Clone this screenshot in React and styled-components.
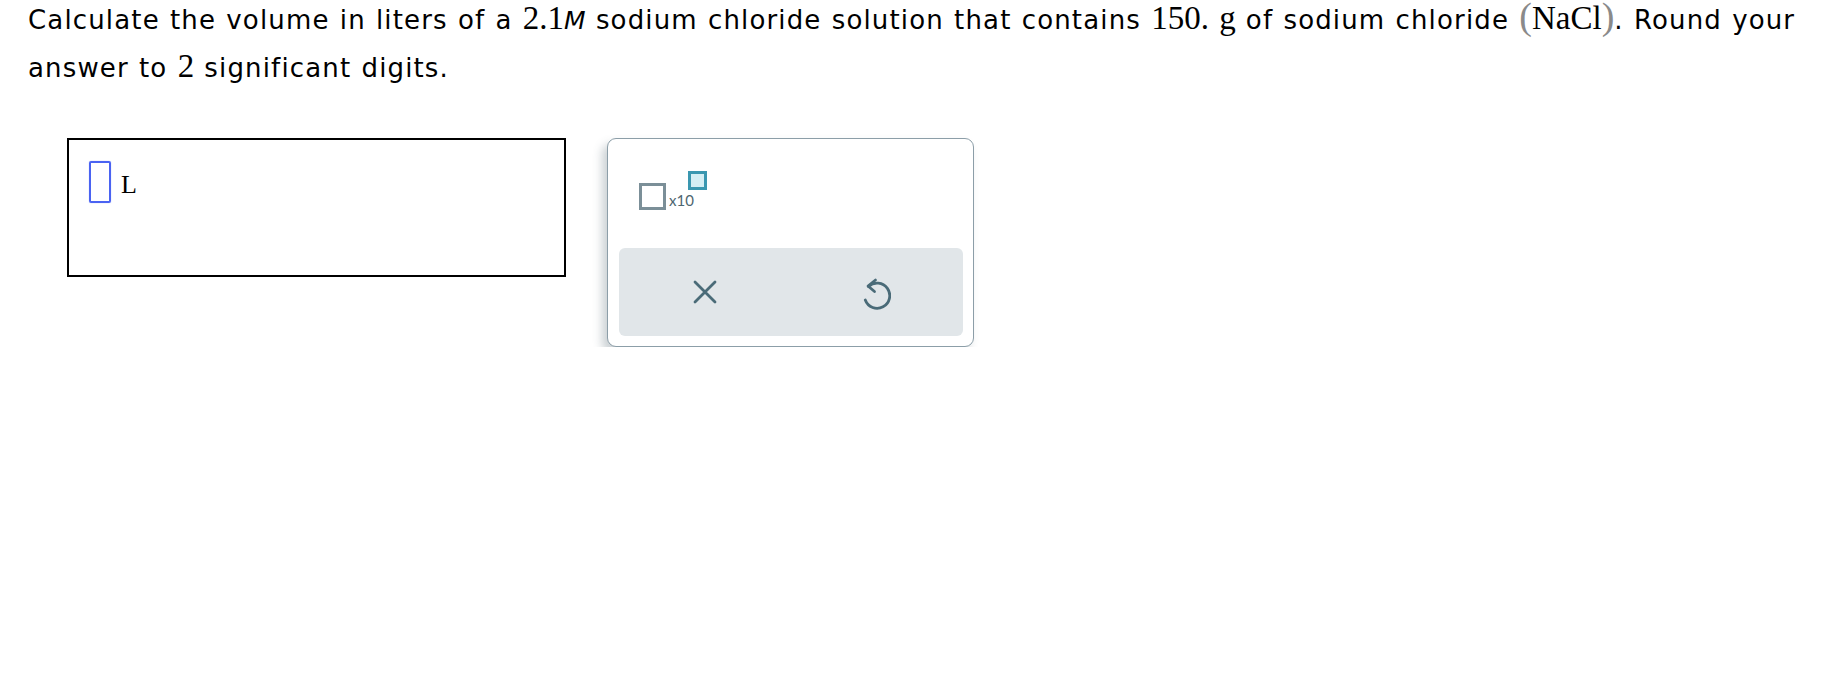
import React from "react";
import styled, { createGlobalStyle } from "styled-components";

const GlobalStyle = createGlobalStyle`
  body {
    margin: 0;
    background: #fff;
  }
`;

const Page = styled.div`
  padding: 0 28px;
`;

const Question = styled.div`
  margin-top: -4px;
  max-width: 1780px;
  font-family: "DejaVu Sans", Verdana, sans-serif;
  font-size: 26px;
  letter-spacing: 1.15px;
  word-spacing: 0.8px;
  line-height: 48px;
  color: #000;
`;

const Num = styled.span`
  font-family: "Liberation Serif", "Times New Roman", serif;
  font-size: 33px;
  letter-spacing: 0;
  line-height: 0;
`;

const Unit = styled.span`
  font-family: "DejaVu Sans", Verdana, sans-serif;
  font-style: italic;
  font-size: 25px;
  letter-spacing: 0;
  line-height: 0;
`;

const Paren = styled.span`
  font-family: "Liberation Serif", "Times New Roman", serif;
  font-size: 38px;
  line-height: 0;
  letter-spacing: 0;
  color: #8a8a8a;
`;

const AnswerRow = styled.div`
  display: flex;
  align-items: flex-start;
  gap: 41px;
  margin-top: 46px;
  padding-left: 39px;
`;

const AnswerBox = styled.div`
  box-sizing: border-box;
  width: 499px;
  height: 139px;
  border: 2px solid #000;
  display: flex;
  align-items: flex-start;
  gap: 10px;
  padding: 21px 0 0 20px;
`;

const Cursor = styled.div`
  box-sizing: border-box;
  width: 22px;
  height: 42px;
  border: 2.5px solid #4a63f2;
  border-radius: 2px;
  box-shadow: 0 0 1px rgba(74, 99, 242, 0.6);
`;

const UnitLabel = styled.span`
  font-family: "Liberation Serif", "Times New Roman", serif;
  font-size: 26px;
  line-height: 26px;
  margin-top: 11px;
  color: #000;
`;

const Palette = styled.div`
  box-sizing: border-box;
  width: 367px;
  height: 209px;
  border: 1.5px solid #8c9ea8;
  border-radius: 9px;
  background: #fff;
  box-shadow: -5px 6px 10px rgba(70, 90, 100, 0.28);
  display: flex;
  flex-direction: column;
  justify-content: space-between;
  padding: 32px 10px 10px 11px;
`;

const SciRow = styled.div`
  display: flex;
  padding-left: 20px;
`;

const SciKey = styled.div`
  display: inline-flex;
  align-items: flex-end;
  height: 39px;
`;

const Slot = styled.div`
  box-sizing: border-box;
  width: ${({ small }) => (small ? 19 : 27)}px;
  height: ${({ small }) => (small ? 19 : 27)}px;
  border: 3px solid ${({ small }) => (small ? "#3a97b0" : "#7b8f98")};
  background: ${({ small }) => (small ? "#d4eef4" : "#fff")};
  align-self: ${({ small }) => (small ? "flex-start" : "flex-end")};
  margin-left: ${({ small }) => (small ? -6 : 0)}px;
`;

const Times = styled.span`
  font-family: Lato, "Open Sans", sans-serif;
  font-size: 15px;
  line-height: 15px;
  margin-left: 3px;
  margin-bottom: 2px;
  color: #4e6670;
`;

const Keys = styled.div`
  display: grid;
  grid-template-columns: 1fr 1fr;
  height: 88px;
  background: #e1e6e9;
  border-radius: 6px;
`;

const KeyButton = styled.button`
  display: flex;
  align-items: center;
  justify-content: center;
  border: none;
  background: transparent;
  padding: 0;
  cursor: pointer;
  color: #4a6b78;
`;

const ClearIcon = () => (
  <svg width="24" height="24" viewBox="0 0 24 24" fill="none">
    <path
      d="M2 2 L22 22 M22 2 L2 22"
      stroke="currentColor"
      strokeWidth="2.8"
      strokeLinecap="round"
    />
  </svg>
);

const UndoIcon = () => (
  <svg width="28" height="32" viewBox="0 0 28 32" fill="none" style={{ marginTop: 4 }}>
    <path
      d="M12.5 2 L5 8 L11.5 13.5"
      stroke="currentColor"
      strokeWidth="2.8"
      strokeLinecap="round"
      strokeLinejoin="round"
    />
    <path
      d="M5.5 8.5 A12.6 12.6 0 1 1 2.3 22"
      stroke="currentColor"
      strokeWidth="2.8"
      strokeLinecap="round"
    />
  </svg>
);

export default function App() {
  return (
    <>
      <GlobalStyle />
      <Page>
        <Question>
          Calculate the volume in liters of a <Num>2.1</Num>
          <Unit>M</Unit> sodium chloride solution that contains{" "}
          <Num>150.</Num> <Num>g</Num> of sodium chloride{" "}
          <Paren>(</Paren>
          <Num>NaCl</Num>
          <Paren>)</Paren>. Round your answer to <Num>2</Num> significant
          digits.
        </Question>
        <AnswerRow>
          <AnswerBox>
            <Cursor />
            <UnitLabel>L</UnitLabel>
          </AnswerBox>
          <Palette>
            <SciRow>
              <SciKey>
                <Slot />
                <Times>x10</Times>
                <Slot small />
              </SciKey>
            </SciRow>
            <Keys>
              <KeyButton aria-label="clear">
                <ClearIcon />
              </KeyButton>
              <KeyButton aria-label="undo">
                <UndoIcon />
              </KeyButton>
            </Keys>
          </Palette>
        </AnswerRow>
      </Page>
    </>
  );
}
